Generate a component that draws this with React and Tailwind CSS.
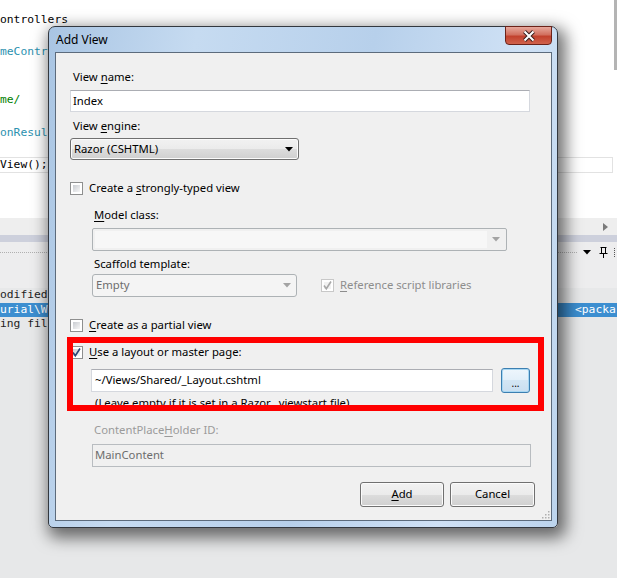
import React from "react";

const ui = "font-['Noto_Sans',sans-serif] text-[11.3px]";
const mono = "font-['DejaVu_Sans_Mono',monospace] text-[11.3px]";

const Check = ({ checked, disabled }) => (
    <span
        className={`relative block w-[13px] h-[13px] shrink-0 border bg-white ${
            disabled ? "border-[#c8c8c8]" : "border-[#8e8f8f]"
        }`}
    >
        <span
            className={`absolute inset-[2px] ${
                disabled
                    ? "bg-[#f2f2f2]"
                    : "bg-[linear-gradient(135deg,#c9ccd1,#f7f7f7)]"
            }`}
        />
        {checked && (
            <svg className="absolute left-[0px] top-[0px]" width="11" height="11" viewBox="0 0 11 11">
                <path
                    d="M2 5.5 L4.3 8.8 L9 1.5"
                    fill="none"
                    stroke={disabled ? "#a8a8a8" : "#2a4574"}
                    strokeWidth="1.6"
                />
            </svg>
        )}
    </span>
);

const Arrow = ({ color = "#000" }) => (
    <svg width="8" height="5" viewBox="0 0 8 5">
        <path d="M0 0 H8 L4 4.5 Z" fill={color} />
    </svg>
);

const WinButton = ({ children, className = "" }) => (
    <div
        className={`rounded-[3px] border border-[#707070] bg-[linear-gradient(#f2f2f2,#ebebeb_50%,#dddddd_50%,#cfcfcf)] shadow-[inset_0_0_0_1px_#fbfbfb] flex items-center ${className}`}
    >
        {children}
    </div>
);

const Label = ({ children, indent, className = "" }) => (
    <div className={`h-[16px] leading-[16px] ${indent ? "ml-[24px]" : "ml-[3px]"} ${className}`}>
        {children}
    </div>
);

const U = ({ children }) => <span className="underline underline-offset-[2px]">{children}</span>;

const codeLines = [
    { t: "ontrollers", c: "text-black" },
    { t: "" },
    { t: "meContr", c: "text-[#2b91af]" },
    { t: "" },
    { t: "" },
    { t: "me/", c: "text-[#008000]" },
    { t: "" },
    { t: "onResul", c: "text-[#2b91af]" },
    { t: "" },
];

export default function App() {
    return (
        <div className="relative w-[617px] h-[578px] overflow-hidden bg-[#e7e8e9]">
            {/* code editor */}
            <div className="flex h-[218px] bg-white">
                <div className={`flex-1 pt-[12px] leading-[16.1px] whitespace-pre ${mono}`}>
                    {codeLines.map((l, i) => (
                        <div key={i} className={`h-[16.1px] ${l.c || ""}`}>
                            {l.t}
                        </div>
                    ))}
                    <div className="h-[16.1px] border border-l-0 border-[#e2e2e2] mr-[1px] leading-[14px] text-black">
                        View();
                    </div>
                </div>
                <div className="w-[3px]">
                    <div className="h-[70px] bg-[#b4b4b4]" />
                </div>
            </div>
            {/* horizontal scrollbar */}
            <div className="h-[17px] bg-[#eeeeee] flex items-center justify-end pr-[9px]">
                <svg width="5" height="8" viewBox="0 0 5 8">
                    <path d="M0 0 L5 4 L0 8 Z" fill="#7a7a7a" />
                </svg>
            </div>
            <div className="h-[7px] bg-[#cdd0dc]" />
            {/* output panel header */}
            <div className="h-[46px] bg-[#ededee] pt-[5px]">
                <div className="h-[10px] flex items-center">
                    <div className="flex-1 border-t border-dotted border-[#b0b0b0] mr-[6px]" />
                    <Arrow />
                    <svg className="ml-[8px]" width="9" height="11" viewBox="0 0 9 11">
                        <path d="M1.5 0.5 H7.5 M2.5 0.5 V6 M6.5 0.5 V6 M0.5 6.5 H8.5 M4.5 6.5 V11" stroke="#000" strokeWidth="1" fill="none" />
                    </svg>
                    <div className="ml-[6px] w-[3px] h-[9px] border-l border-dotted border-[#555]" />
                </div>
            </div>
            {/* output body */}
            <div className={`leading-[14.5px] whitespace-pre text-[#1e1e1e] ${mono}`}>
                <div>odified</div>
                <div className="flex justify-between bg-[#3c8ed0] text-white">
                    <span>urial\W</span>
                    <span className="w-[42px] overflow-hidden">&lt;packa</span>
                </div>
                <div>ing fil</div>
            </div>

            {/* Add View dialog */}
            <div className="absolute left-[48px] top-[26px] w-[510px] h-[502px] rounded-t-[7px] rounded-b-[5px] border border-[#33383f] bg-[linear-gradient(100deg,#a9c5e3,#c6dbf1_25%,#b7d0eb_55%,#cfe1f5_80%,#bcd4ed)] shadow-[4px_6px_16px_4px_rgba(0,0,0,0.55)] flex flex-col">
                <div className={`relative h-[25px] flex items-center pl-[7px] text-black ${ui} text-[12px]`}>
                    Add View
                    <div className="absolute right-[5px] top-[-1px] w-[47px] h-[19px] rounded-b-[4px] border border-[#6b2219] bg-[linear-gradient(#e7a89c,#d2705f_45%,#c2412d_55%,#d0624c)] flex items-center justify-center">
                        <svg width="14" height="12" viewBox="0 0 14 12">
                            <path d="M2.5 1.5 L11.5 10.5 M11.5 1.5 L2.5 10.5" stroke="#3b2320" strokeWidth="4" />
                            <path d="M2.5 1.5 L11.5 10.5 M11.5 1.5 L2.5 10.5" stroke="#ffffff" strokeWidth="2" />
                        </svg>
                    </div>
                </div>
                <div className={`relative ml-[6px] w-[497px] h-[469px] border border-[#5c6b7c] bg-[#f0f0f0] pl-[14px] text-black ${ui}`}>
                    <Label className="mt-[16px]">
                        View <U>n</U>ame:
                    </Label>
                    <div className="mt-[5px] w-[460px] h-[22px] border border-[#d5d8de] border-t-[#abadb3] bg-white flex items-center pl-[2px]">
                        Index
                    </div>
                    <Label className="mt-[6px]">
                        View <U>e</U>ngine:
                    </Label>
                    <WinButton className="mt-[4px] w-[229px] h-[22px] justify-between pl-[3px] pr-[5px]">
                        <span>Razor (CSHTML)</span>
                        <Arrow />
                    </WinButton>
                    <div className="mt-[20px] h-[16px] flex items-center">
                        <Check />
                        <span className="ml-[6px]">
                            Create a <U>s</U>trongly-typed view
                        </span>
                    </div>
                    <Label indent className="mt-[11px]">
                        <U>M</U>odel class:
                    </Label>
                    <div className="mt-[5px] ml-[22px] w-[415px] h-[23px] rounded-[2px] border border-[#adb2b5] flex items-center p-[2px]">
                        <div className="flex-1 h-full bg-[#f7f7f7]" />
                        <div className="w-[17px] flex justify-center">
                            <Arrow color="#a3a3a3" />
                        </div>
                    </div>
                    <Label indent className="mt-[5px]">
                        Scaf<U>f</U>old template:
                    </Label>
                    <div className="mt-[2px] h-[23px] flex items-center">
                        <div className="ml-[22px] w-[205px] h-[23px] rounded-[3px] border border-[#adb2b5] bg-[#f4f4f4] flex items-center justify-between pl-[3px] pr-[5px] text-[#6d6d6d]">
                            <span>Empty</span>
                            <Arrow color="#a3a3a3" />
                        </div>
                        <div className="ml-[24px]">
                            <Check checked disabled />
                        </div>
                        <span className="ml-[6px] text-[#8d8d8d]">
                            <U>R</U>eference script libraries
                        </span>
                    </div>
                    <div className="mt-[20px] h-[16px] flex items-center">
                        <Check />
                        <span className="ml-[6px]">
                            <U>C</U>reate as a partial view
                        </span>
                    </div>
                    <div className="mt-[11px] h-[16px] flex items-center">
                        <Check checked />
                        <span className="ml-[6px]">
                            <U>U</U>se a layout or master page:
                        </span>
                    </div>
                    <div className="mt-[8px] h-[25px] flex items-center">
                        <div className="ml-[21px] w-[402px] h-[23px] border border-[#d5d8de] border-t-[#abadb3] bg-white flex items-center pl-[3px]">
                            ~/Views/Shared/_Layout.cshtml
                        </div>
                        <div className="ml-[8px] w-[29px] h-[25px] rounded-[3px] border border-[#3c7fb1] bg-[linear-gradient(#eef6fc,#e2eff9_50%,#d3e6f4_50%,#c9def0)] shadow-[inset_0_0_0_1px_#a7d7f3] flex items-end justify-center pb-[4px] text-[10px] leading-[10px]">
                            ...
                        </div>
                    </div>
                    <div className="mt-[2px] ml-[25px] h-[16px] leading-[16px]">
                        (Leave empty if it is set in a Razor _viewstart file)
                    </div>
                    <Label indent className="mt-[11px] text-[#9b9b9b]">
                        ContentPlace<U>H</U>older ID:
                    </Label>
                    <div className="mt-[6px] ml-[22px] w-[439px] h-[23px] border border-[#b8bcc0] bg-[#f0f0f0] flex items-center pl-[2px] text-[#6d6d6d]">
                        MainContent
                    </div>
                    <div className="mt-[15px] flex justify-end gap-[6px] pr-[16px]">
                        <WinButton className="w-[84px] h-[25px] justify-center">
                            <span>
                                <U>A</U>dd
                            </span>
                        </WinButton>
                        <WinButton className="w-[85px] h-[25px] justify-center">Cancel</WinButton>
                    </div>
                    {/* annotation */}
                    <div className="absolute left-[11px] top-[284px] w-[477px] h-[74px] border-[6px] border-[#ff0000]" />
                    <svg className="absolute right-[1px] bottom-[1px]" width="9" height="9" viewBox="0 0 9 9">
                        <g fill="#b0b0b0">
                            <rect x="7" y="1" width="1.5" height="1.5" />
                            <rect x="4" y="4" width="1.5" height="1.5" />
                            <rect x="7" y="4" width="1.5" height="1.5" />
                            <rect x="1" y="7" width="1.5" height="1.5" />
                            <rect x="4" y="7" width="1.5" height="1.5" />
                            <rect x="7" y="7" width="1.5" height="1.5" />
                        </g>
                    </svg>
                </div>
            </div>
        </div>
    );
}
